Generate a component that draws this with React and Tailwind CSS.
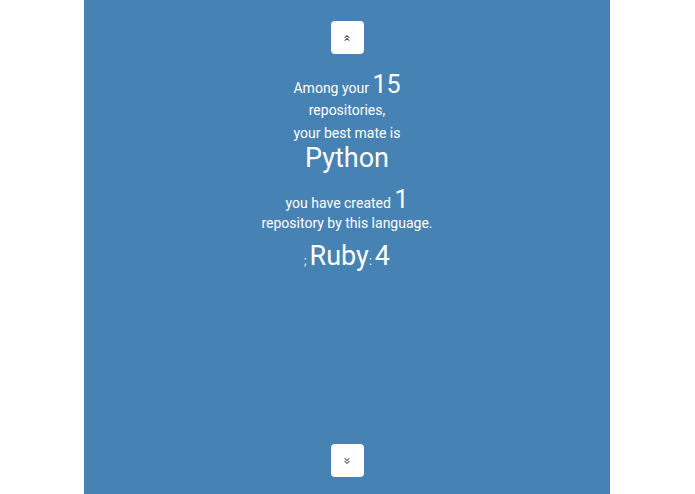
import React from 'react';
import { ChevronsUp, ChevronsDown } from 'lucide-react';

function NavButton({ children }) {
  return (
    <button className="w-[33px] h-[33px] bg-white rounded-[4px] flex items-center justify-center text-[#555]">
      {children}
    </button>
  );
}

export default function App() {
  return (
    <div className="min-h-[494px] bg-white" style={{ fontFamily: 'Roboto, "Noto Sans", sans-serif' }}>
      <div className="w-[526px] h-[494px] ml-[84px] bg-[#4682b4] text-white flex flex-col items-center pt-[21px] pb-[17px]">
        <NavButton>
          <ChevronsUp className="w-[10px] h-[10px]" strokeWidth={2.5} />
        </NavButton>

        {/* Stats block */}
        <div className="flex flex-col items-center">
          <div className="mt-[18px] flex items-baseline leading-none">
            <span className="text-[14px]">Among your&nbsp;</span>
            <span className="text-[25px]">15</span>
          </div>
          <div className="mt-[6px] text-[14px] leading-none">repositories,</div>
          <div className="mt-[9px] text-[14px] leading-none">your best mate is</div>
          <div className="mt-[5px] text-[27px] leading-none">Python</div>
          <div className="mt-[15px] flex items-baseline leading-none">
            <span className="text-[14px]">you have created&nbsp;</span>
            <span className="text-[25px]">1</span>
          </div>
          <div className="mt-[5px] text-[14px] leading-[12px]">repository by this language.</div>
          <div className="mt-[14px] flex items-baseline leading-none">
            <span className="text-[12px]">;&nbsp;</span>
            <span className="text-[27px]">Ruby</span>
            <span className="text-[12px]">:&nbsp;</span>
            <span className="text-[27px]">4</span>
          </div>
        </div>

        <div className="flex-1" />

        <NavButton>
          <ChevronsDown className="w-[10px] h-[10px]" strokeWidth={2.5} />
        </NavButton>
      </div>
    </div>
  );
}
